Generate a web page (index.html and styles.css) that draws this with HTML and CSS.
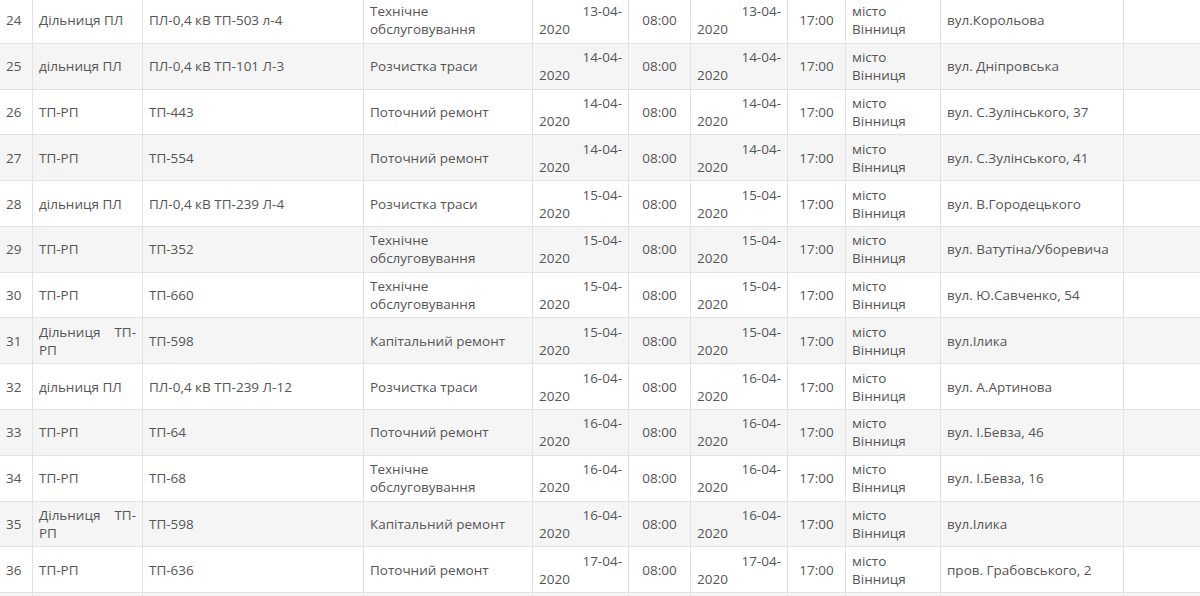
FILE: index.html
```html
<!DOCTYPE html>
<html lang="uk">
<head>
<meta charset="utf-8">
<title>Графік відключень</title>
<link rel="stylesheet" href="styles.css">
</head>
<body>
<table class="sched">
<colgroup>
<col class="c-num"><col class="c-dep"><col class="c-obj"><col class="c-work"><col class="c-date"><col class="c-time"><col class="c-date2"><col class="c-time2"><col class="c-city"><col class="c-street"><col class="c-extra">
</colgroup>
<tbody>
<tr><td>24</td><td>Дільниця ПЛ</td><td>ПЛ-0,4 кВ ТП-503 л-4</td><td>Технічне обслуговування</td><td class="dt"><span class="l1">13-04-</span><span class="l2">2020</span></td><td class="tm">08:00</td><td class="dt"><span class="l1">13-04-</span><span class="l2">2020</span></td><td class="tm">17:00</td><td>місто Вінниця</td><td>вул.Корольова</td><td></td></tr>
<tr><td>25</td><td>дільниця ПЛ</td><td>ПЛ-0,4 кВ ТП-101 Л-3</td><td>Розчистка траси</td><td class="dt"><span class="l1">14-04-</span><span class="l2">2020</span></td><td class="tm">08:00</td><td class="dt"><span class="l1">14-04-</span><span class="l2">2020</span></td><td class="tm">17:00</td><td>місто Вінниця</td><td>вул. Дніпровська</td><td></td></tr>
<tr><td>26</td><td>ТП-РП</td><td>ТП-443</td><td>Поточний ремонт</td><td class="dt"><span class="l1">14-04-</span><span class="l2">2020</span></td><td class="tm">08:00</td><td class="dt"><span class="l1">14-04-</span><span class="l2">2020</span></td><td class="tm">17:00</td><td>місто Вінниця</td><td>вул. С.Зулінського, 37</td><td></td></tr>
<tr><td>27</td><td>ТП-РП</td><td>ТП-554</td><td>Поточний ремонт</td><td class="dt"><span class="l1">14-04-</span><span class="l2">2020</span></td><td class="tm">08:00</td><td class="dt"><span class="l1">14-04-</span><span class="l2">2020</span></td><td class="tm">17:00</td><td>місто Вінниця</td><td>вул. С.Зулінського, 41</td><td></td></tr>
<tr><td>28</td><td>дільниця ПЛ</td><td>ПЛ-0,4 кВ ТП-239 Л-4</td><td>Розчистка траси</td><td class="dt"><span class="l1">15-04-</span><span class="l2">2020</span></td><td class="tm">08:00</td><td class="dt"><span class="l1">15-04-</span><span class="l2">2020</span></td><td class="tm">17:00</td><td>місто Вінниця</td><td>вул. В.Городецького</td><td></td></tr>
<tr><td>29</td><td>ТП-РП</td><td>ТП-352</td><td>Технічне обслуговування</td><td class="dt"><span class="l1">15-04-</span><span class="l2">2020</span></td><td class="tm">08:00</td><td class="dt"><span class="l1">15-04-</span><span class="l2">2020</span></td><td class="tm">17:00</td><td>місто Вінниця</td><td>вул. Ватутіна/Уборевича</td><td></td></tr>
<tr><td>30</td><td>ТП-РП</td><td>ТП-660</td><td>Технічне обслуговування</td><td class="dt"><span class="l1">15-04-</span><span class="l2">2020</span></td><td class="tm">08:00</td><td class="dt"><span class="l1">15-04-</span><span class="l2">2020</span></td><td class="tm">17:00</td><td>місто Вінниця</td><td>вул. Ю.Савченко, 54</td><td></td></tr>
<tr><td>31</td><td class="just">Дільниця ТП-РП</td><td>ТП-598</td><td>Капітальний ремонт</td><td class="dt"><span class="l1">15-04-</span><span class="l2">2020</span></td><td class="tm">08:00</td><td class="dt"><span class="l1">15-04-</span><span class="l2">2020</span></td><td class="tm">17:00</td><td>місто Вінниця</td><td>вул.Ілика</td><td></td></tr>
<tr><td>32</td><td>дільниця ПЛ</td><td>ПЛ-0,4 кВ ТП-239 Л-12</td><td>Розчистка траси</td><td class="dt"><span class="l1">16-04-</span><span class="l2">2020</span></td><td class="tm">08:00</td><td class="dt"><span class="l1">16-04-</span><span class="l2">2020</span></td><td class="tm">17:00</td><td>місто Вінниця</td><td>вул. А.Артинова</td><td></td></tr>
<tr><td>33</td><td>ТП-РП</td><td>ТП-64</td><td>Поточний ремонт</td><td class="dt"><span class="l1">16-04-</span><span class="l2">2020</span></td><td class="tm">08:00</td><td class="dt"><span class="l1">16-04-</span><span class="l2">2020</span></td><td class="tm">17:00</td><td>місто Вінниця</td><td>вул. І.Бевза, 46</td><td></td></tr>
<tr><td>34</td><td>ТП-РП</td><td>ТП-68</td><td>Технічне обслуговування</td><td class="dt"><span class="l1">16-04-</span><span class="l2">2020</span></td><td class="tm">08:00</td><td class="dt"><span class="l1">16-04-</span><span class="l2">2020</span></td><td class="tm">17:00</td><td>місто Вінниця</td><td>вул. І.Бевза, 16</td><td></td></tr>
<tr><td>35</td><td class="just">Дільниця ТП-РП</td><td>ТП-598</td><td>Капітальний ремонт</td><td class="dt"><span class="l1">16-04-</span><span class="l2">2020</span></td><td class="tm">08:00</td><td class="dt"><span class="l1">16-04-</span><span class="l2">2020</span></td><td class="tm">17:00</td><td>місто Вінниця</td><td>вул.Ілика</td><td></td></tr>
<tr><td>36</td><td>ТП-РП</td><td>ТП-636</td><td>Поточний ремонт</td><td class="dt"><span class="l1">17-04-</span><span class="l2">2020</span></td><td class="tm">08:00</td><td class="dt"><span class="l1">17-04-</span><span class="l2">2020</span></td><td class="tm">17:00</td><td>місто Вінниця</td><td>пров. Грабовського, 2</td><td></td></tr>
<tr class="blank"><td></td><td></td><td></td><td></td><td></td><td></td><td></td><td></td><td></td><td></td><td></td></tr>
</tbody>
</table>
</body>
</html>
```
FILE: styles.css
```css
html, body {
  margin: 0;
  padding: 0;
  background: #fff;
  overflow: hidden;
}
.sched {
  border-collapse: collapse;
  table-layout: fixed;
  width: 1200px;
  margin-top: -3px;
  margin-left: -1px;
  font-family: "Open Sans", "Noto Sans", sans-serif;
  font-size: 13.5px;
  line-height: 18px;
  color: #555;
}
.c-num { width: 33px; }
.c-dep { width: 110px; }
.c-obj { width: 221px; }
.c-work { width: 169px; }
.c-date { width: 96px; }
.c-time { width: 62px; }
.c-date2 { width: 97px; }
.c-time2 { width: 58px; }
.c-city { width: 95px; }
.c-street { width: 183px; }
.c-extra { width: 77px; }
.sched td {
  border: 1px solid #e3e3e3;
  padding: 4.4px 6px;
  vertical-align: middle;
  text-align: left;
}
.sched tr:nth-child(even) td {
  background: #f5f5f5;
}
.sched td.just {
  text-align: justify;
}
.sched td.tm {
  text-align: center;
}
.dt .l1 {
  display: block;
  text-align: right;
}
.dt .l2 {
  display: block;
  text-align: left;
}
.blank td {
  height: 36px;
}
```
